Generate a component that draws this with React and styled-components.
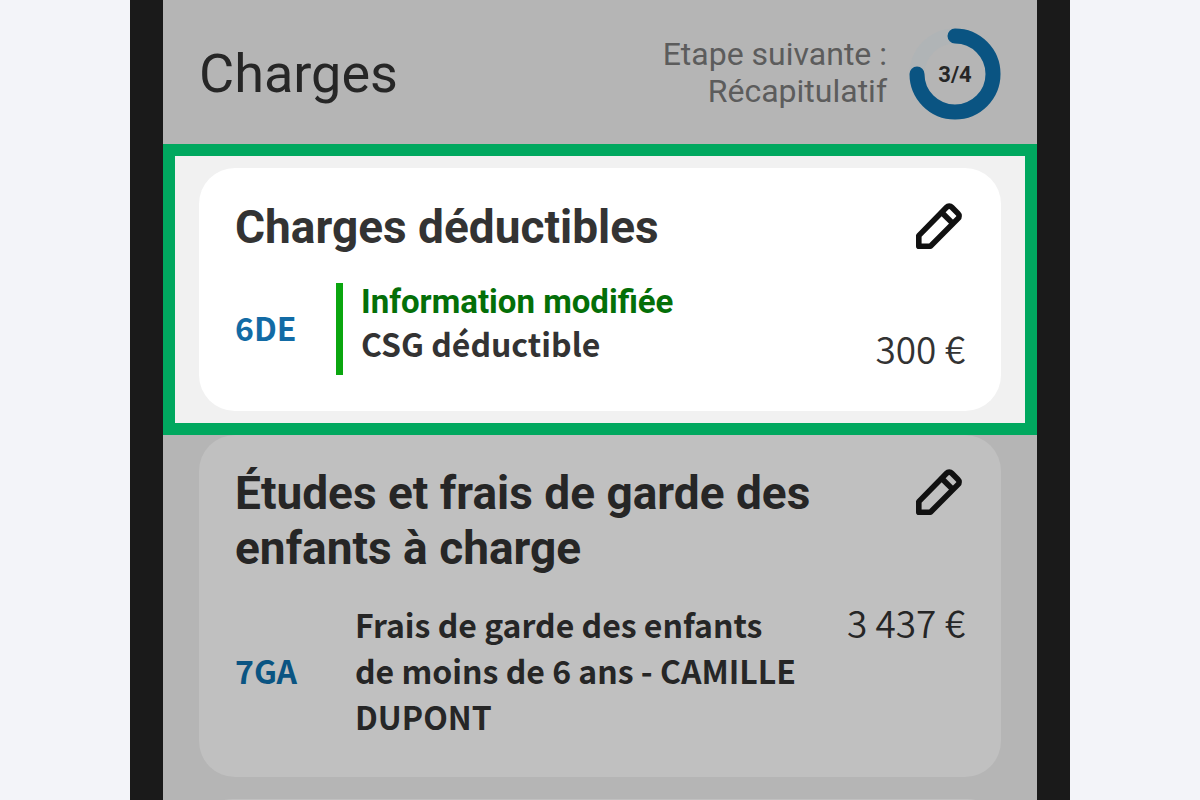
import React from 'react';
import styled, { createGlobalStyle } from 'styled-components';

const sans = "'Noto Sans CJK SC', 'Noto Sans', sans-serif";

const GlobalStyle = createGlobalStyle`
  * {
    box-sizing: border-box;
  }

  body {
    margin: 0;
    background: #f3f4f9;
    font-family: Roboto, sans-serif;
  }

  h1, h2, p {
    margin: 0;
  }
`;

const Phone = styled.div`
  max-width: 940px;
  height: 100vh;
  margin: 0 auto;
  padding: 0 33px;
  overflow: hidden;
  background: #1a1a1a;
`;

const Screen = styled.main`
  min-height: 100%;
  background: #b5b5b5;
`;

const Header = styled.header`
  display: flex;
  align-items: center;
  height: 144px;
  padding: 3px 36px 0;
`;

const PageTitle = styled.h1`
  flex: 1;
  font-size: 54px;
  font-weight: 400;
  line-height: 64px;
  color: #262626;
`;

const NextStep = styled.p`
  margin-right: 22px;
  padding-bottom: 2px;
  font-size: 32px;
  line-height: 37px;
  text-align: right;
  color: #5c5c5c;
`;

const Progress = styled.div`
  display: grid;
  place-items: center;
  width: 92px;
  height: 92px;

  & > * {
    grid-area: 1 / 1;
  }
`;

const ProgressLabel = styled.span`
  padding-top: 2px;
  font-size: 22px;
  font-weight: 700;
  color: #262626;
`;

const Highlight = styled.div`
  padding: 12px 24px;
  border: 12px solid #00a85f;
  background: #f1f1f1;
`;

const CardList = styled.div`
  display: grid;
  gap: 22px;
  padding: 0 36px;
`;

const Card = styled.section`
  min-height: 60px;
  padding: ${(props) => (props.$dimmed ? 31 : 32)}px 36px 36px;
  border-radius: 36px;
  background: ${(props) => (props.$dimmed ? '#c0c0c0' : '#fff')};
  color: ${(props) => (props.$dimmed ? '#262626' : '#333')};
`;

const CardHead = styled.div`
  display: flex;
  justify-content: space-between;
  align-items: flex-start;
  margin-bottom: ${(props) => (props.$changed ? 28 : 25)}px;
`;

const CardTitle = styled.h2`
  max-width: 600px;
  font-size: 46px;
  font-weight: 700;
  line-height: 55px;
`;

const EditButton = styled.button`
  display: flex;
  margin: 2px 2px 0 0;
  padding: 0;
  border: 0;
  background: none;
  color: #111;
  cursor: pointer;
`;

const Row = styled.div`
  display: flex;
  align-items: center;
  padding-bottom: ${(props) => (props.$changed ? 0 : 2)}px;
`;

const Code = styled.span`
  width: ${(props) => (props.$changed ? 101 : 120)}px;
  padding-bottom: ${(props) => (props.$changed ? 4 : 0)}px;
  font-family: ${sans};
  font-size: 32px;
  font-weight: 700;
  line-height: 46px;
  color: ${(props) => (props.$dimmed ? '#0a5482' : '#126ba5')};
`;

const Details = styled.div`
  flex: 1;
  height: ${(props) => (props.$changed ? '92px' : 'auto')};
  padding-left: ${(props) => (props.$changed ? 18 : 0)}px;
  border-left: ${(props) => (props.$changed ? '7px solid #0aa60f' : '0')};
`;

const Changed = styled.p`
  font-size: 33px;
  font-weight: 700;
  line-height: 37px;
  color: #046f08;
`;

const Label = styled.p`
  max-width: 450px;
  font-family: ${sans};
  font-size: 32px;
  font-weight: 700;
  line-height: 46px;
`;

const Amount = styled.span`
  align-self: ${(props) => (props.$changed ? 'flex-end' : 'flex-start')};
  padding-bottom: 6px;
  font-family: ${sans};
  font-size: 37px;
  font-weight: 350;
  line-height: 42px;
  white-space: nowrap;
`;

const StepRing = () => (
  <svg width="92" height="92" viewBox="0 0 92 92" fill="none" strokeWidth="15" aria-hidden="true">
    <circle cx="46" cy="46" r="38" stroke="#b0b4b6" />
    <path d="M46 8A38 38 0 1 1 8 46" stroke="#0a5482" strokeLinecap="round" />
  </svg>
);

const Pencil = () => (
  <svg
    width="48"
    height="48"
    viewBox="0 0 48 48"
    fill="none"
    stroke="currentColor"
    strokeWidth="5.6"
    strokeLinejoin="round"
    aria-hidden="true"
  >
    <path d="M3.8 44.2V33.6L31.6 5.2a3.6 3.6 0 0 1 5.2 0L43 11.4a3.6 3.6 0 0 1 0 5.2L15.4 44.2Z" />
    <path d="M26.8 10.4L37.6 21.2" />
  </svg>
);

const DeclarationCard = ({ title, code, label, amount, changed = false, dimmed = false }) => (
  <Card $dimmed={dimmed}>
    <CardHead $changed={changed}>
      <CardTitle>{title}</CardTitle>
      <EditButton type="button" aria-label={`Modifier ${title}`}>
        <Pencil />
      </EditButton>
    </CardHead>
    <Row $changed={changed}>
      <Code $changed={changed} $dimmed={dimmed}>
        {code}
      </Code>
      <Details $changed={changed}>
        {changed && <Changed>Information modifiée</Changed>}
        <Label>{label}</Label>
      </Details>
      <Amount $changed={changed}>{amount}</Amount>
    </Row>
  </Card>
);

const App = () => (
  <>
    <GlobalStyle />
    <Phone>
      <Screen>
        <Header>
          <PageTitle>Charges</PageTitle>
          <NextStep>
            Etape suivante :<br />
            Récapitulatif
          </NextStep>
          <Progress>
            <StepRing />
            <ProgressLabel>3/4</ProgressLabel>
          </Progress>
        </Header>
        <Highlight>
          <DeclarationCard
            title="Charges déductibles"
            code="6DE"
            label="CSG déductible"
            amount="300 €"
            changed
          />
        </Highlight>
        <CardList>
          <DeclarationCard
            title="Études et frais de garde des enfants à charge"
            code="7GA"
            label="Frais de garde des enfants de moins de 6 ans - CAMILLE DUPONT"
            amount="3 437 €"
            dimmed
          />
          <Card $dimmed />
        </CardList>
      </Screen>
    </Phone>
  </>
);

export default App;
